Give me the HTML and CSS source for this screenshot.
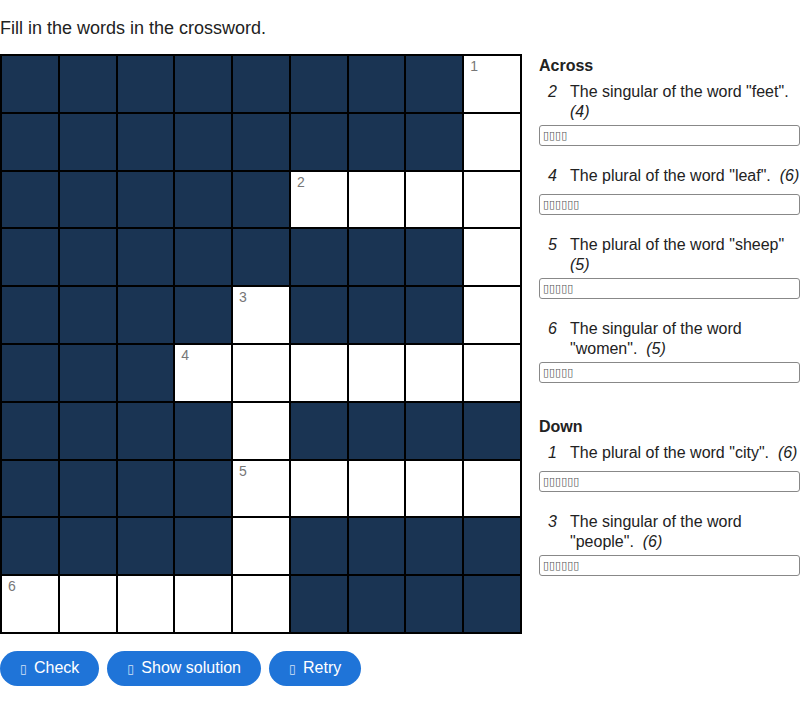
FILE: index.html
```html
<!DOCTYPE html>
<html lang="en">
<head>
    <meta charset="UTF-8">
    <meta name="viewport" content="width=device-width, initial-scale=1.0">
    <title>Crossword</title>
    <link rel="stylesheet" href="styles.css">
</head>
<body>
    <p class="task">Fill in the words in the crossword.</p>

    <div class="puzzle">
        <div class="grid" id="grid"></div>

        <div class="clues">
            <h2>Across</h2>
            <div class="clue">
                <span class="num">2</span>
                <span class="text">The singular of the word "feet". <em>(4)</em></span>
            </div>
            <input type="text" class="answer" placeholder="▯▯▯▯">

            <div class="clue">
                <span class="num">4</span>
                <span class="text">The plural of the word "leaf". &nbsp;<em>(6)</em></span>
            </div>
            <input type="text" class="answer" placeholder="▯▯▯▯▯▯">

            <div class="clue">
                <span class="num">5</span>
                <span class="text">The plural of the word "sheep" <em>(5)</em></span>
            </div>
            <input type="text" class="answer" placeholder="▯▯▯▯▯">

            <div class="clue">
                <span class="num">6</span>
                <span class="text">The singular of the word "women". &nbsp;<em>(5)</em></span>
            </div>
            <input type="text" class="answer" placeholder="▯▯▯▯▯">

            <h2 class="down">Down</h2>
            <div class="clue">
                <span class="num">1</span>
                <span class="text">The plural of the word "city". &nbsp;<em>(6)</em></span>
            </div>
            <input type="text" class="answer" placeholder="▯▯▯▯▯▯">

            <div class="clue">
                <span class="num">3</span>
                <span class="text">The singular of the word "people". &nbsp;<em>(6)</em></span>
            </div>
            <input type="text" class="answer" placeholder="▯▯▯▯▯▯">
        </div>
    </div>

    <div class="buttons">
        <button><span class="icon">▯</span>Check</button>
        <button><span class="icon">▯</span>Show solution</button>
        <button><span class="icon">▯</span>Retry</button>
    </div>

    <script>
        // # = blocked cell, . = letter cell, digit = numbered cell
        const layout = [
            '########1',
            '########.',
            '#####2...',
            '########.',
            '####3###.',
            '###4.....',
            '####.####',
            '####5....',
            '####.####',
            '6....####'
        ];

        const grid = document.getElementById('grid');
        grid.innerHTML = layout
            .map(row => row.split('').map(c => {
                if (c === '#') return '<div class="cell blocked"></div>';
                if (c === '.') return '<div class="cell"></div>';
                return `<div class="cell"><span class="label">${c}</span></div>`;
            }).join(''))
            .join('');
    </script>
</body>
</html>
```

FILE: styles.css
```css
body {
    font-family: "Liberation Sans", Arial, sans-serif;
    margin: 0;
    color: #222;
    background: #fff;
}

.task {
    font-size: 18px;
    margin: 0;
    padding-top: 18px;
    box-sizing: border-box;
    height: 54px;
}

.puzzle {
    display: flex;
    gap: 17px;
}

.grid {
    width: 522px;
    box-sizing: border-box;
    display: grid;
    grid-template-columns: repeat(9, 1fr);
    grid-auto-rows: 55.8px;
    gap: 2px;
    background: #000;
    border: 2px solid #000;
}

.cell {
    background: #fff;
    padding: 2px 6px;
    font-size: 14px;
    color: #777;
}

.cell.blocked {
    background: #1a3453;
}

.clues {
    flex: 1;
}

.clues h2 {
    font-size: 16px;
    margin: 2px 0 5px;
    line-height: 20px;
}

.clues h2.down {
    margin-top: 34px;
}

.clue {
    display: flex;
    font-size: 16px;
    line-height: 20px;
    min-height: 25px;
    padding-top: 1px;
    margin-bottom: 3px;
}

.clue .num {
    font-style: italic;
    width: 9px;
    margin-left: 9px;
    margin-right: 13px;
    flex-shrink: 0;
}

.answer {
    display: block;
    width: 100%;
    height: 21px;
    box-sizing: border-box;
    border: 1px solid #888;
    border-radius: 3px;
    padding: 0 3px;
    margin: 0 0 19px;
    font-family: "DejaVu Sans", sans-serif;
    font-size: 11px;
}

.answer::placeholder {
    color: #555;
}

.buttons {
    display: flex;
    gap: 8px;
    margin-top: 17px;
}

button {
    font-family: "Liberation Sans", Arial, sans-serif;
    font-size: 16px;
    color: #fff;
    background: #1f74d8;
    border: none;
    border-radius: 18px;
    height: 35px;
    padding: 0 20px;
    cursor: pointer;
}

button .icon {
    display: inline-block;
    width: 14px;
    font-family: "DejaVu Sans", sans-serif;
    font-size: 12px;
    text-align: left;
    opacity: 0.8;
}
```
